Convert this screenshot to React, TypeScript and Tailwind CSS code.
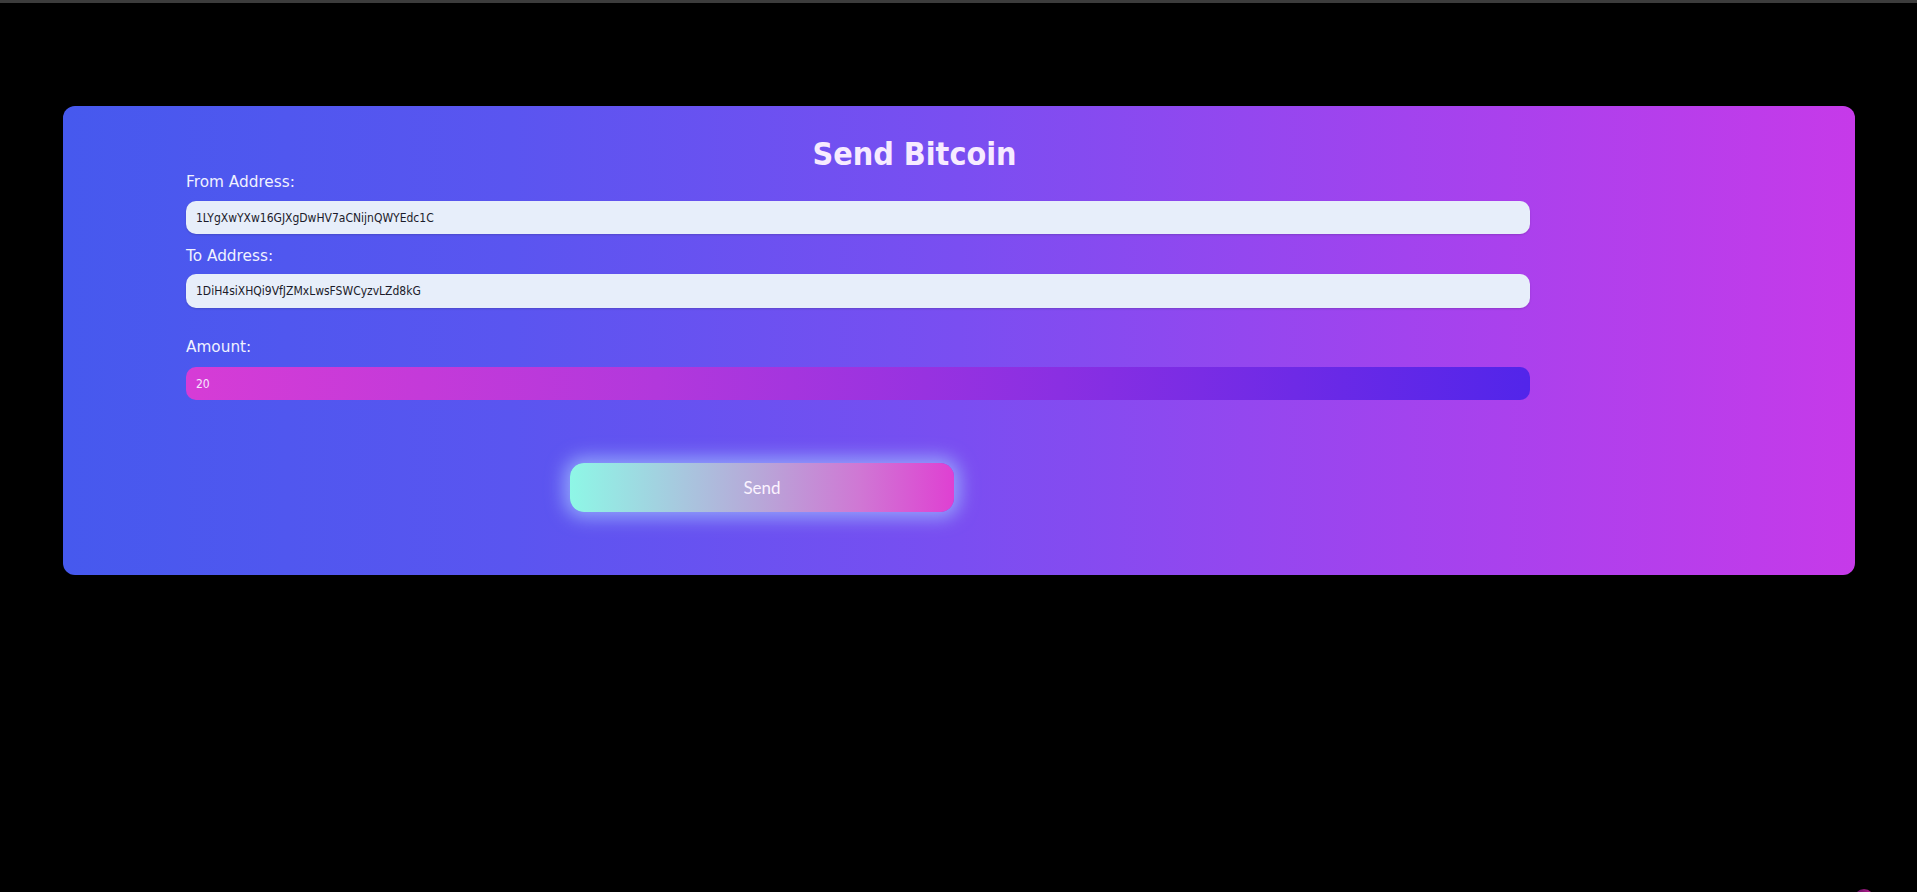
import React from "react";

export default function App() {
  const label =
    "block h-[18px] text-[15.3px] leading-[18px] text-[#f0f2ff] [font-family:'DejaVu_Sans',sans-serif]";
  const input =
    "block w-[1344px] rounded-[10px] px-[10px] text-[12px] outline-none [font-family:'DejaVu_Sans_Condensed','DejaVu_Sans',sans-serif] [font-stretch:condensed]";
  return (
    <div className="relative h-[892px] w-full overflow-hidden bg-black">
      <div className="h-[3px] w-full bg-[#3c3c3c]" />
      <div className="ml-[63px] mt-[103px] w-[1792px] rounded-[12px] bg-[linear-gradient(90deg,#4659ee_0%,#5a55f0_25%,#7a4ef1_50%,#a243ee_75%,#c63ae9_100%)] pl-[123px] pt-[30px] pb-[63px]">
        <h1 className="h-[37px] w-[1457px] text-center text-[32px] font-bold leading-[37px] text-[#f7ebff] [font-family:'DejaVu_Sans_Condensed','DejaVu_Sans',sans-serif] [font-stretch:condensed]">
          Send Bitcoin
        </h1>
        <label className={label}>From Address:</label>
        <input
          className={`${input} mt-[10px] h-[33px] bg-[#e7eefa] text-[#1b1b2a] shadow-[0_1px_2px_rgba(0,0,0,0.15)]`}
          defaultValue="1LYgXwYXw16GJXgDwHV7aCNijnQWYEdc1C"
        />
        <label className={`${label} mt-[13px]`}>To Address:</label>
        <input
          className={`${input} mt-[9px] h-[34px] bg-[#e7eefa] text-[#1b1b2a] shadow-[0_1px_2px_rgba(0,0,0,0.15)]`}
          defaultValue="1DiH4siXHQi9VfJZMxLwsFSWCyzvLZd8kG"
        />
        <label className={`${label} mt-[30px]`}>Amount:</label>
        <input
          className={`${input} mt-[11px] h-[33px] bg-[linear-gradient(90deg,#d63cd6_0%,#b238dc_35%,#8a2fe2_65%,#5225ea_100%)] text-[#f6e8ff]`}
          defaultValue="20"
        />
        <button className="ml-[384px] mt-[63px] block h-[49px] w-[384px] rounded-[14px] bg-[linear-gradient(90deg,#8ef7e6_0%,#a8c6de_30%,#b8a6d8_50%,#cf78d4_75%,#df40d2_100%)] text-[17px] text-[#fbf3ff] shadow-[0_0_18px_6px_rgba(160,190,255,0.75)] [font-family:Lato,sans-serif]">
          Send
        </button>
      </div>
      <div className="absolute left-[1854px] top-[889px] h-[20px] w-[20px] rounded-full bg-[linear-gradient(90deg,#5a1060,#c0208f)]" />
    </div>
  );
}
